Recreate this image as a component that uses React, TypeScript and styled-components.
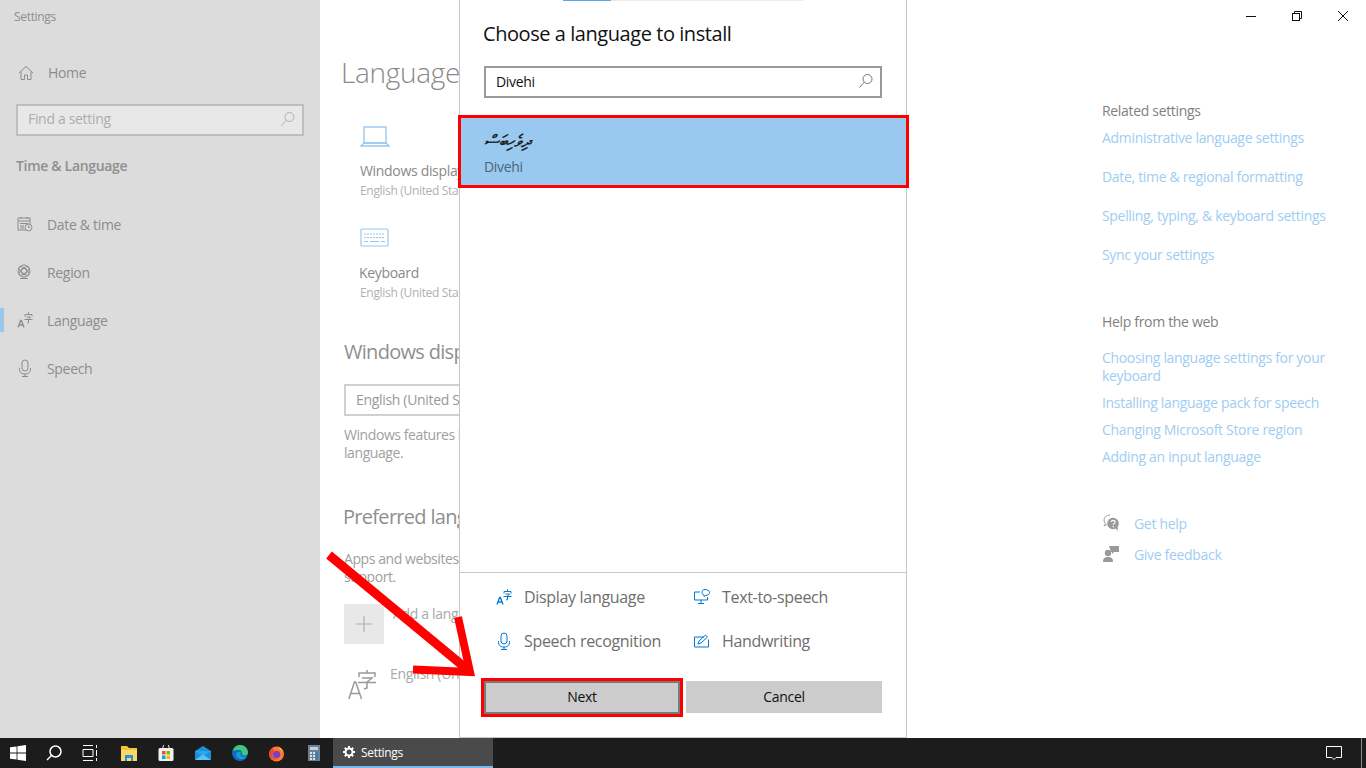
import React from "react";
import styled, { createGlobalStyle } from "styled-components";

const Global = createGlobalStyle`
  html, body { margin: 0; padding: 0; width: 1366px; height: 768px; overflow: hidden; background: #fff; }
  * { box-sizing: border-box; }
  body { font-family: "Open Sans", "Noto Sans", "Liberation Sans", sans-serif; letter-spacing: -0.02em; }
`;

const Page = styled.div`
  position: relative; width: 1366px; height: 768px; display: flex; flex-direction: column; overflow: hidden;
`;
const Main = styled.div`display: flex; height: 738px;`;
const Sidebar = styled.aside`
  width: 320px; background: #dcdcdc; display: flex; flex-direction: column; color: #8c8c8c;
`;
const AppTitle = styled.div`font-size: 12px; line-height: 16px; padding: 9px 0 0 14px; color: #8f8f8f;`;
const HomeRow = styled.div`
  display: flex; align-items: center; height: 24px; margin-top: 36px; padding-left: 18px; gap: 14px; font-size: 14px; line-height: 20px;
`;
const SideSearch = styled.div`
  margin: 19px 16px 0; height: 32px; border: 2px solid #bfbfbf; background: #e8e8e8; display: flex; align-items: center;
  justify-content: space-between; padding: 0 6px 3px 10px; font-size: 14px; color: #adadad;
`;
const GroupTitle = styled.div`font-size: 14px; font-weight: 600; line-height: 20px; margin: 20px 0 24px 16px; color: #8f8f8f;`;
const NavRow = styled.div<{ $active?: boolean }>`
  height: 48px; display: flex; align-items: center; gap: 14px; padding-left: 17px; font-size: 14px; position: relative;
  ${(p) => p.$active && `&::before { content: ""; position: absolute; left: 0; top: 12px; width: 4px; height: 24px; background: #99c8ef; }`}
`;
const Content = styled.main`flex: 1; display: flex; background: #fff; min-width: 0;`;
const Center = styled.div`width: 782px; padding-left: 22px; color: #8a8a8a; font-size: 14px;`;
const H1 = styled.h1`font-size: 28px; font-weight: 300; line-height: 38px; margin: 53px 0 0 -1px; color: #8a8a8a;`;
const Tile = styled.div<{ $top: number }>`padding-left: 18px; margin-top: ${(p) => p.$top}px; display: flex; flex-direction: column;`;
const TileTitle = styled.div<{ $key?: boolean }>`
  font-size: 14px; line-height: 18px; color: #8a8a8a; margin-top: ${(p) => (p.$key ? 17 : 15)}px; margin-left: ${(p) => (p.$key ? -1 : 0)}px;
`;
const TileSub = styled.div`font-size: 12px; line-height: 16px; margin-top: 3px; color: #b0b0b0;`;
const H2 = styled.h2<{ $top: number; $left: number }>`
  font-size: 20px; font-weight: 400; line-height: 28px; letter-spacing: -0.035em; color: #8f8f8f;
  margin: ${(p) => p.$top}px 0 0 ${(p) => p.$left}px;
`;
const SelectBox = styled.div`
  width: 300px; height: 32px; margin: 18px 0 0 2px; border: 2px solid #d0d0d0; padding: 0 10px 2px; display: flex; align-items: center; color: #999;
`;
const Para = styled.p<{ $top: number }>`margin: ${(p) => p.$top}px 0 0 2px; line-height: 18px; font-size: 14px; letter-spacing: -0.03em; color: #a0a0a0; width: 480px;`;
const AddRow = styled.div`display: flex; margin: 18px 0 0 2px; gap: 9px; color: #a8a8a8;`;
const AddBtn = styled.div`width: 40px; height: 40px; background: #e8e8e8; display: flex; align-items: center; justify-content: center;`;
const LangRow = styled.div`display: flex; gap: 14px; margin: 20px 0 0 6px; color: #a8a8a8;`;
const LangIconWrap = styled.span`display: inline-flex; margin-top: 6px;`;
const Right = styled.aside`flex: 1; padding-top: 101px; padding-left: 0; font-size: 14px; position: relative;`;
const RightTitle = styled.div<{ $top?: number }>`line-height: 20px; color: #7f7f7f; margin-top: ${(p) => p.$top ?? 0}px;`;
const LinkList = styled.div<{ $gap: number; $top: number }>`display: flex; flex-direction: column; gap: ${(p) => p.$gap}px; margin-top: ${(p) => p.$top}px;`;
const Lnk = styled.div`color: #a0cdf2; line-height: 18px; width: 232px;`;
const HelpRow = styled.div<{ $top: number }>`display: flex; align-items: center; gap: 14px; color: #a0cdf2; height: 20px; margin-top: ${(p) => p.$top}px;`;
const WinControls = styled.div`position: absolute; top: 0; right: 0; display: flex;`;
const WinBtn = styled.div`width: 46px; height: 32px; display: flex; align-items: center; justify-content: center;`;

const Dialog = styled.section`
  position: absolute; left: 459px; top: 0; width: 448px; height: 738px; background: #fff; border: 1px solid #c6c6c6; border-top: 0;
  display: flex; flex-direction: column;
`;
const TopStrip = styled.div`height: 1px; display: flex; background: #fff;`;
const StripSeg = styled.div<{ $w: number; $c: string }>`width: ${(p) => p.$w}px; background: ${(p) => p.$c};`;
const DialogTitle = styled.h2`font-size: 20px; font-weight: 400; line-height: 28px; letter-spacing: -0.022em; margin: 19px 0 0 23px; color: #111;`;
const DialogSearch = styled.div`
  margin: 18px 24px 0; height: 32px; border: 2px solid #999; display: flex; align-items: center; justify-content: space-between;
  padding: 0 6px 2px 10px; font-size: 14px; color: #111;
`;
const ResultRow = styled.div`
  margin: 18px 0 0 -1px; height: 71px; width: 449px; background: #99c9ef; outline: 3px solid #ff0000; outline-offset: -2px; padding: 14px 25px 0;
`;
const Native = styled.div`
  font-family: "DejaVu Sans", "Noto Sans", serif; font-style: italic; font-size: 17px; line-height: 22px; color: #111; height: 24px;
  -webkit-text-stroke: 0.3px #111;
`;
const Latin = styled.div`font-size: 14px; line-height: 18px; color: #4e6478; margin-top: 4px;`;
const Spacer = styled.div`flex: 1;`;
const Features = styled.div`
  border-top: 1px solid #c8c8c8; padding: 2px 0 0 36px; display: grid; grid-template-columns: 198px 1fr; grid-auto-rows: 44px; align-items: center;
`;
const Feature = styled.div`display: flex; align-items: center; gap: 12px; font-size: 16px; color: #6e6e6e;`;
const FeatureIcon = styled.span`display: inline-flex; width: 16px; justify-content: center;`;
const Buttons = styled.div`display: flex; gap: 6px; align-items: flex-start; padding: 18px 24px 23px;`;
const Btn = styled.div<{ $primary?: boolean }>`
  width: 196px; height: 32px; background: #cccccc; display: flex; align-items: center; justify-content: center; font-size: 14px; color: #111; padding-bottom: 2px;
  ${(p) => p.$primary && `border: 2px solid #7a7a7a; height: 33px; outline: 3px solid #ff0000; outline-offset: 0;`}
`;
const ArrowLayer = styled.svg`position: absolute; left: 320px; top: 540px; pointer-events: none;`;

const Taskbar = styled.footer`
  height: 30px; background: #1c1c1c; display: flex; align-items: center; position: relative;
`;
const TaskIcon = styled.div<{ $w?: number }>`
  width: ${(p) => p.$w ?? 37}px; height: 30px; display: flex; align-items: center; justify-content: center; flex: none;
`;
const TaskApps = styled.div`display: flex; margin-left: 3px;`;
const TaskApp = styled.div`
  width: 160px; height: 30px; margin-left: 1px; background: #4a4a4a; border-bottom: 2px solid #76b9ed; display: flex; align-items: center; gap: 6px;
  padding-left: 10px; color: #fff; font-size: 12px;
`;
const TrayRight = styled.div`margin-left: auto; display: flex; align-items: center; height: 30px;`;
const TrayEdge = styled.div`width: 1px; height: 30px; background: #8a8a8a; margin: 0 4px 0 19px;`;

const I = ({ w = 16, h = 16, c = "#8c8c8c", sw = 1, children }: any) => (
  <svg width={w} height={h} viewBox={`0 0 ${w} ${h}`} fill="none" stroke={c} strokeWidth={sw} style={{ flex: "none" }}>{children}</svg>
);
const SearchGlyph = ({ c }: { c: string }) => (
  <I w={16} h={16} c={c}><circle cx="9.5" cy="6" r="4.5" /><path d="M6.3 9.2 1.5 14.5" /></I>
);
const LangGlyph = ({ c }: { c: string }) => (
  <I w={16} h={16} c={c}>
    <path d="M1 15.5 3.6 8.5h.8L7 15.5M1.900 13h4.200" strokeWidth="1.3" />
    <path d="M11.500 .2v1.800M8 4.500V2.500h7v2M9.500 5h4l-2 2v3.500l-1.500 .5M7.500 7.500h8" />
  </I>
);
const LangGlyphLarge = () => (
  <I w={28} h={30} c="#999" sw={1.5}>
    <path d="M.8 29 6.500 12h1.200L13.500 29M2.800 23.500h8.600" />
    <path d="M19 0v3M11 7V3h16v4M14 8h10l-5 4v6l-3 1M10 12.500h18" />
  </I>
);
const MicGlyph = ({ c }: { c: string }) => (
  <I w={16} h={18} c={c}><rect x="5" y="1" width="6" height="11" rx="3" /><path d="M2.5 9v1.5a4.5 4.5 0 0 0 4.5 4.5h2a4.5 4.5 0 0 0 4.5-4.5V9M8 15v2M5 17.5h6" /></I>
);

const Arrow = () => (
  <ArrowLayer width="170" height="150" viewBox="320 540 170 150" fill="none" stroke="#ff0000">
    <path d="M329 555 468 670" strokeWidth="9" />
    <path d="M458 617 470 672 413 669.500" strokeWidth="8" strokeMiterlimit="10" />
  </ArrowLayer>
);

export default function App() {
  return (
    <Page>
      <Global />
      <Main>
        <Sidebar>
          <AppTitle>Settings</AppTitle>
          <HomeRow>
            <I><path d="M1 8 8 1.5 15 8M3 6.5V14.5H6.5V10h3v4.5H13V6.5" /></I>
            Home
          </HomeRow>
          <SideSearch>Find a setting<SearchGlyph c="#b0b0b0" /></SideSearch>
          <GroupTitle>Time &amp; Language</GroupTitle>
          <NavRow>
            <I><rect x="1" y="2" width="12" height="12" /><path d="M1 5h12M4 1v2M10 1v2M3 7.5h8M3 10h4M3 12h4" /><circle cx="11.5" cy="11.5" r="3.5" fill="#dcdcdc" /><path d="M11.5 9.5v2h1.5" /></I>
            Date &amp; time
          </NavRow>
          <NavRow>
            <I><circle cx="7" cy="7" r="6" /><circle cx="7" cy="7" r="3" /><ellipse cx="7" cy="7" rx="6" ry="2.5" transform="rotate(40 7 7)" /><ellipse cx="7" cy="7" rx="6" ry="2.5" transform="rotate(-40 7 7)" /><path d="M3 14.5h8M7 13v1.5" /></I>
            Region
          </NavRow>
          <NavRow $active>
            <LangGlyph c="#8c8c8c" />
            Language
          </NavRow>
          <NavRow>
            <MicGlyph c="#8c8c8c" />
            Speech
          </NavRow>
        </Sidebar>
        <Content>
          <Center>
            <H1>Language</H1>
            <Tile $top={35}>
              <I w={30} h={21} c="#99c8ef" sw={1.4}><rect x="4" y="1" width="22" height="16" /><path d="M1 20h28l-3-3H4z" /></I>
              <TileTitle>Windows display language</TileTitle>
              <TileSub>English (United States)</TileSub>
            </Tile>
            <Tile $top={29}>
              <I w={29} h={19} c="#99c8ef" sw={1.2}><rect x="1" y="1" width="27" height="17" rx="1" /><path d="M4 6h21M4 9.5h21" strokeDasharray="2 1" /><path d="M4 13.5h4M10 13.5h9M21 13.5h4" /></I>
              <TileTitle $key>Keyboard</TileTitle>
              <TileSub>English (United States)</TileSub>
            </Tile>
            <H2 $top={37} $left={2}>Windows display language</H2>
            <SelectBox>English (United States)</SelectBox>
            <Para $top={10}>Windows features like Settings and File Explorer will appear in this<br />language.</Para>
            <H2 $top={41} $left={1}>Preferred languages</H2>
            <Para $top={19}>Apps and websites will appear in the first language in the list that they<br />support.</Para>
            <AddRow>
              <AddBtn><I w={18} h={18} c="#b0b0b0" sw={1.2}><path d="M9 1v16M1 9h16" /></I></AddBtn>
              Add a language
            </AddRow>
            <LangRow>
              <LangIconWrap><LangGlyphLarge /></LangIconWrap>
              English (United States)
            </LangRow>
          </Center>
          <Right>
            <WinControls>
              <WinBtn><I w={10} h={10} c="#111"><path d="M0 5.5h10" /></I></WinBtn>
              <WinBtn><I w={10} h={10} c="#111"><rect x=".5" y="2.5" width="7" height="7" /><path d="M2.5 2.5v-2h7v7h-2" /></I></WinBtn>
              <WinBtn><I w={10} h={10} c="#111"><path d="M0 0l10 10M10 0 0 10" /></I></WinBtn>
            </WinControls>
            <RightTitle>Related settings</RightTitle>
            <LinkList $gap={21} $top={8}>
              <Lnk>Administrative language settings</Lnk>
              <Lnk>Date, time &amp; regional formatting</Lnk>
              <Lnk>Spelling, typing, &amp; keyboard settings</Lnk>
              <Lnk>Sync your settings</Lnk>
            </LinkList>
            <RightTitle $top={48}>Help from the web</RightTitle>
            <LinkList $gap={9} $top={17}>
              <Lnk>Choosing language settings for your keyboard</Lnk>
              <Lnk>Installing language pack for speech</Lnk>
              <Lnk>Changing Microsoft Store region</Lnk>
              <Lnk>Adding an input language</Lnk>
            </LinkList>
            <HelpRow $top={47}>
              <svg width="18" height="18" viewBox="0 0 18 18" style={{ flex: "none" }}>
                <path d="M8 1a6 5 0 0 0-6 5c0 1.5.5 2.6 1.4 3.5L2 12l3-1.5" fill="none" stroke="#a0a0a0" />
                <circle cx="11" cy="9.5" r="5.8" fill="#9a9a9a" />
                <path d="M13 14l3 2.5-.5-4z" fill="#9a9a9a" />
                <path d="M9.300 8c.2-2.200 3.800-2.200 3.800 0 0 1.400-1.800 1.400-1.800 3M11.300 12v1.300" fill="none" stroke="#fff" strokeWidth="1.2" />
              </svg>
              Get help
            </HelpRow>
            <HelpRow $top={11}>
              <svg width="18" height="18" viewBox="0 0 18 18" style={{ flex: "none" }} fill="#9a9a9a">
                <circle cx="6" cy="8" r="3.2" /><path d="M1 17c0-4 2-5 5-5s5 1 5 5z" /><path d="M7 1h10v6h-5l-2 2V7H9z" />
              </svg>
              Give feedback
            </HelpRow>
          </Right>
        </Content>
      </Main>
      <Taskbar>
        <TaskIcon $w={36}>
          <svg width="16" height="16" viewBox="0 0 16 16" fill="#fff"><path d="M0 2.3 6.6 1.4V7.6H0zM7.4 1.3 16 0V7.6H7.4zM0 8.4H6.6V14.6L0 13.7zM7.4 8.4H16V16L7.4 14.7z" /></svg>
        </TaskIcon>
        <TaskIcon $w={36}>
          <I w={16} h={16} c="#fff" sw={1.5}><circle cx="9.5" cy="6.5" r="5.5" /><path d="M5.5 10.5 1 15" /></I>
        </TaskIcon>
        <TaskIcon $w={35}>
          <I w={16} h={16} c="#fff" sw={1}><path d="M1 .5h10M1 15.5h10M1 4.5h10v7H1zM14.5 0v3M14.5 5v6M14.5 13v3" /></I>
        </TaskIcon>
        <TaskApps>
          <TaskIcon>
            <svg width="16" height="15" viewBox="0 0 16 15"><path d="M0 0h6l2 2h8v13H0z" fill="#f5c23c" /><path d="M0 4h16v11H0z" fill="#fbd968" /><path d="M4 9h8v6h-2v-3H6v3H4z" fill="#2f8fd8" /></svg>
          </TaskIcon>
          <TaskIcon>
            <svg width="16" height="16" viewBox="0 0 16 16"><path d="M5 4V2a3 3 0 0 1 6 0v2" fill="none" stroke="#ddd" /><rect x="0.5" y="3" width="15" height="13" rx="1.5" fill="#f1f1f1" /><rect x="4" y="6" width="3.5" height="3.5" fill="#f25022" /><rect x="8.5" y="6" width="3.5" height="3.5" fill="#7fba00" /><rect x="4" y="10.5" width="3.5" height="3.5" fill="#00a4ef" /><rect x="8.5" y="10.5" width="3.5" height="3.5" fill="#ffb900" /></svg>
          </TaskIcon>
          <TaskIcon>
            <svg width="16" height="14" viewBox="0 0 16 14"><path d="M0 5 8 0l8 5v9H0z" fill="#1c8fd9" /><path d="M0 5l8 5 8-5" fill="#2aa6ee" /><path d="M0 14 8 8.5l8 5.5z" fill="#5cc3f5" /></svg>
          </TaskIcon>
          <TaskIcon>
            <svg width="16" height="16" viewBox="0 0 16 16"><circle cx="8" cy="8" r="8" fill="#0f6cbd" /><path d="M1 6c1-4 4-6 7-6 4 0 8 3 8 7.5 0 2-1.500 3-3.500 3-1.500 0-3-.5-2.500-2 .5-2-1-3.500-3-3.500C4.500 5 2 5.500 1 6z" fill="#3ec97a" /><path d="M4 9c0 3 2.500 5 5.500 5 2 0 4-.8 5-2.500-2 1-6 .5-6-2 0-1 .5-1.500 1-2C7 6.500 4 7 4 9z" fill="#1d9bd8" /></svg>
          </TaskIcon>
          <TaskIcon>
            <svg width="17" height="17" viewBox="0 0 17 17"><circle cx="8.500" cy="9" r="7.500" fill="#ff7a2b" /><path d="M9 1c3 1 6 4 6.500 7-1-2-2-3-3.500-3.500C12 3 11 2 9 1z" fill="#ffcb2e" /><circle cx="8.500" cy="9.500" r="3.800" fill="#7b3fc9" /><path d="M1 8c1-3 3-4 5-4.500L5 6c1 0 2 .5 3 1-3 0-4 2-4 3 0 3 3 5 6 4.500C6 16 2 14 1 8z" fill="#e8452c" /></svg>
          </TaskIcon>
          <TaskIcon>
            <svg width="12" height="16" viewBox="0 0 12 16"><rect width="12" height="16" fill="#6e8091" /><rect x="2" y="2" width="8" height="3" fill="#bcd0e0" /><g fill="#d6e2ec"><rect x="2" y="7" width="2" height="2" /><rect x="5" y="7" width="2" height="2" /><rect x="2" y="10" width="2" height="2" /><rect x="5" y="10" width="2" height="2" /><rect x="2" y="13" width="2" height="2" /><rect x="5" y="13" width="2" height="2" /></g><rect x="8" y="7" width="2" height="8" fill="#2f7fb8" /></svg>
          </TaskIcon>
        </TaskApps>
        <TaskApp>
          <svg width="12" height="12" viewBox="0 0 12 12"><circle cx="6" cy="6" r="3.500" fill="none" stroke="#fff" strokeWidth="2" /><path d="M6 0v2.500M6 9.500V12M0 6h2.500M9.500 6H12M1.800 1.800l1.800 1.800M8.400 8.400l1.800 1.800M10.200 1.800 8.400 3.600M3.600 8.400l-1.800 1.800" stroke="#fff" strokeWidth="2" /></svg>
          Settings
        </TaskApp>
        <TrayRight>
          <svg width="16" height="14" viewBox="0 0 16 14" fill="none" stroke="#fff"><path d="M.5.5h15v11H10l-2 2-2-2H.5z" /></svg>
          <TrayEdge />
        </TrayRight>
      </Taskbar>

      <Dialog>
        <TopStrip>
          <StripSeg $w={103} $c="#fff" />
          <StripSeg $w={48} $c="#5aa7e8" />
          <StripSeg $w={193} $c="#ececec" />
        </TopStrip>
        <DialogTitle>Choose a language to install</DialogTitle>
        <DialogSearch>Divehi<SearchGlyph c="#777" /></DialogSearch>
        <ResultRow>
          <Native>ދިވެހިބަސް</Native>
          <Latin>Divehi</Latin>
        </ResultRow>
        <Spacer />
        <Features>
          <Feature><FeatureIcon><LangGlyph c="#0078d7" /></FeatureIcon>Display language</Feature>
          <Feature>
            <FeatureIcon><I w={16} h={16} c="#0078d7"><path d="M6 3H.5v8h13V8M7 11v3M4 14.500h6" /><path d="M11 .5c2.500 0 4.500 1 4.500 3s-2 3-4 3l-1.500 1v-1.500c-1.500-.5-2-1.500-2-2.500 0-2 1-3 3-3z" /></I></FeatureIcon>
            Text-to-speech
          </Feature>
          <Feature><FeatureIcon><MicGlyph c="#0078d7" /></FeatureIcon>Speech recognition</Feature>
          <Feature>
            <FeatureIcon><I w={16} h={14} c="#0078d7"><path d="M10 3H.5v10h14V5.500" /><path d="M4 10l1-3 6.500-6 2 2L7 9z" /></I></FeatureIcon>
            Handwriting
          </Feature>
        </Features>
        <Buttons>
          <Btn $primary>Next</Btn>
          <Btn>Cancel</Btn>
        </Buttons>
      </Dialog>
      <Arrow />
    </Page>
  );
}
